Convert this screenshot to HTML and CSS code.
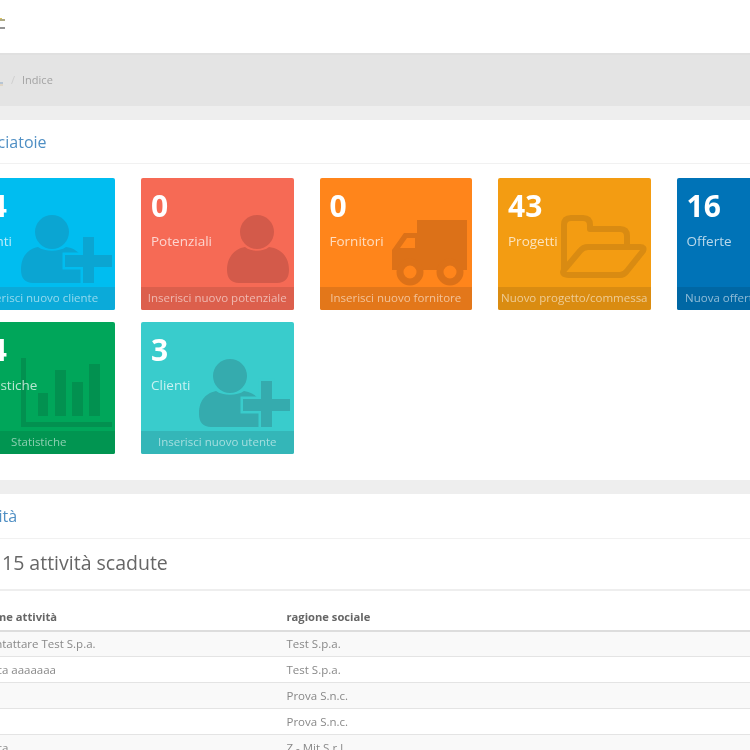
FILE: index.html
```html
<!DOCTYPE html>
<html lang="it">
<head>
<meta charset="utf-8">
<title>Indice</title>
<link rel="stylesheet" href="styles.css">
</head>
<body>
<div class="page">
  <header class="top">
    <svg class="logo" viewBox="0 0 6 12" width="6" height="12"><path d="M0 2h5" stroke="#8a8450" stroke-width="1.4"/><path d="M0 0.5h2" stroke="#d8c25a" stroke-width="1"/><path d="M0 10h5" stroke="#666" stroke-width="1.4"/></svg>
  </header>
  <nav class="crumbs">
    <svg class="home" viewBox="0 0 4 6" width="4" height="6"><path d="M0 3h3" stroke="#8aa6c4" stroke-width="1"/><path d="M0 5h3" stroke="#dcc8a8" stroke-width="1"/></svg>
    <span class="sep">/</span>
    <span class="here">Indice</span>
  </nav>
  <section class="panel first">
    <h2 class="panel-title">Scorciatoie</h2>
    <div class="tiles">
      <a class="tile aqua">
        <svg class="glyph" viewBox="0 0 152 131"><circle cx="89" cy="54" r="17" class="ic"/><path class="ic" d="M58 92C58 77 66 71 75 69C82 74 96 74 103 69C111 70 116 74 120 80L120 105H70C62 105 58 100 58 92Z"/><path class="plus" d="M120 59H131V77H149V89H131V105H120V89H102V77H120Z"/></svg>
        <div class="num">14</div><div class="lab">Clienti</div><div class="foot">Inserisci nuovo cliente</div>
      </a>
      <a class="tile red">
        <svg class="glyph" viewBox="0 0 152 131"><circle cx="116" cy="54" r="17" class="ic"/><path class="ic" d="M86 92C86 77 96 70 104 69C110 74 122 74 128 69C138 70 148 77 148 92C148 100 144 105 136 105H98C90 105 86 100 86 92Z"/></svg>
        <div class="num">0</div><div class="lab">Potenziali</div><div class="foot">Inserisci nuovo potenziale</div>
      </a>
      <a class="tile orange">
        <svg class="glyph" viewBox="0 0 152 131"><path class="ic" d="M97 42H147V92H72V72L84 55H97Z"/><path class="win" d="M80 70L87 60H95V70Z"/><circle class="ring" cx="90" cy="94" r="10"/><circle class="ring" cx="130" cy="94" r="10"/></svg>
        <div class="num">0</div><div class="lab">Fornitori</div><div class="foot">Inserisci nuovo fornitore</div>
      </a>
      <a class="tile yellow">
        <svg class="glyph" viewBox="0 0 152 131"><path class="line" d="M66 92V47Q66 40 73 40H85Q92 40 92 47V51H122Q129 51 129 58V66M71 97H122Q126 97 129 93L145 73Q147 69 142 69H90Q85 69 82 73L66 92Q63 97 71 97Z"/></svg>
        <div class="num">43</div><div class="lab">Progetti</div><div class="foot">Nuovo progetto/commessa</div>
      </a>
      <a class="tile blue">
        <div class="num">16</div><div class="lab">Offerte</div><div class="foot">Nuova offerta economica</div>
      </a>
      <a class="tile green">
        <svg class="glyph" viewBox="0 0 152 131"><path class="ic" d="M58 36H63V100H149V105H58ZM75 71H85V94H75ZM92 48H103V94H92ZM109 60H120V94H109ZM126 42H137V94H126Z"/></svg>
        <div class="num">14</div><div class="lab">Statistiche</div><div class="foot">Statistiche</div>
      </a>
      <a class="tile teal">
        <svg class="glyph" viewBox="0 0 152 131"><circle cx="89" cy="54" r="17" class="ic"/><path class="ic" d="M58 92C58 77 66 71 75 69C82 74 96 74 103 69C111 70 116 74 120 80L120 105H70C62 105 58 100 58 92Z"/><path class="plus" d="M120 59H131V77H149V89H131V105H120V89H102V77H120Z"/></svg>
        <div class="num">3</div><div class="lab">Clienti</div><div class="foot">Inserisci nuovo utente</div>
      </a>
    </div>
  </section>
  <section class="panel">
    <h2 class="panel-title second">Attività</h2>
    <h3 class="due">15 attività scadute</h3>
    <table class="list">
      <thead><tr><th>nome attività</th><th class="wide">ragione sociale</th></tr></thead>
      <tbody>
        <tr><td>Contattare Test S.p.a.</td><td>Test S.p.a.</td></tr>
        <tr><td>Meta aaaaaaa</td><td>Test S.p.a.</td></tr>
        <tr><td>Ok</td><td>Prova S.n.c.</td></tr>
        <tr><td>Ok</td><td>Prova S.n.c.</td></tr>
        <tr><td>Meta</td><td>Z - Mit S.r.l.</td></tr>
      </tbody>
    </table>
  </section>
</div>
</body>
</html>
```
FILE: styles.css
```css
* { box-sizing: border-box; }
html, body { margin: 0; height: 750px; overflow: hidden; background: #fff; }
body { font-family: "Open Sans", "Liberation Sans", sans-serif; }
.page { width: 900px; margin-left: -37.5px; background: #eeeeee; filter: blur(.35px); }
.top { height: 53px; background: #fff; padding: 18px 0 0 37.5px; }
.logo { display: block; }
.crumbs { height: 53px; background: #e4e4e4; border-top: 2px solid #e0e0e0; padding: 0 0 2px 37.5px; display: flex; align-items: center; font-size: 11px; color: #a3a3a3; }
.home { margin-top: 6px; }
.sep { margin-left: 7px; color: #cfcfcf; }
.here { margin-left: 7px; }
.panel { background: #fff; margin-top: 14px; }
.first { padding-bottom: 26px; }
.panel-title { margin: 0; height: 44px; padding: 11px 0 0 2.5px; font-size: 16px; line-height: 22px; font-weight: 400; color: #4f8fc4; border-bottom: 1px solid #f1f1f1; }
.second { height: 45px; }
.tiles { display: grid; grid-template-columns: repeat(5, 152.5px); grid-auto-rows: 131.5px; column-gap: 26px; row-gap: 12.5px; padding-top: 14px; }
.tile { position: relative; display: flex; flex-direction: column; border-radius: 2px; color: #fff; overflow: hidden; background: var(--bg); }
.glyph { position: absolute; left: 0; top: 0; width: 152px; height: 131px; }
.ic { fill: var(--ic); }
.plus { fill: var(--ic); stroke: var(--bg); stroke-width: 5px; paint-order: stroke; }
.win { fill: var(--bg); }
.ring { fill: var(--bg); stroke: var(--ic); stroke-width: 7px; }
.line { fill: none; stroke: var(--ic); stroke-width: 6px; stroke-linejoin: round; stroke-linecap: round; }
.num, .lab, .foot { position: relative; }
.num { font-size: 30px; line-height: 36px; font-weight: 700; padding: 10px 0 0 10px; height: 46px; }
.lab { font-size: 13.5px; line-height: 20px; padding: 7px 0 0 10px; height: 27px; color: rgba(255,255,255,.72); }
.foot { margin-top: auto; height: 23px; line-height: 22px; font-size: 11.5px; text-align: center; white-space: nowrap; background: var(--ft); color: rgba(255,255,255,.55); }
.aqua { --bg: #00bdf0; --ic: #0ba5d2; --ft: #0baad9; }
.red { --bg: #f66a55; --ic: #d35a4a; --ft: #dc5f4c; }
.orange { --bg: #ff851b; --ic: #dc7118; --ft: #e3771a; }
.yellow { --bg: #f39c12; --ic: #d98b12; --ft: #da8c11; }
.blue { --bg: #0073b7; --ic: #0067a4; --ft: #0067a4; }
.green { --bg: #00a65a; --ic: #029150; --ft: #019551; }
.teal { --bg: #39cccc; --ic: #35abae; --ft: #34b6b8; }
.due { margin: 0; height: 52px; padding: 0 0 0 39.5px; font-size: 19.5px; line-height: 47px; font-weight: 400; color: #666; border-bottom: 2px solid #eeeeee; }
.list { width: 863px; margin-left: 10.5px; border-collapse: collapse; table-layout: fixed; font-size: 11.5px; }
.list th { width: 305.5px; height: 40px; padding: 12px 8px 0; text-align: left; font-size: 11.2px; font-weight: 700; color: #666; border-bottom: 2px solid #dddddd; }
.list th.wide { width: auto; }
.list td { height: 26px; padding: 0 8px; color: #888; border-top: 1px solid #e4e4e4; white-space: nowrap; }
.list tbody tr:nth-child(odd) { background: #f9f9f9; }
```
